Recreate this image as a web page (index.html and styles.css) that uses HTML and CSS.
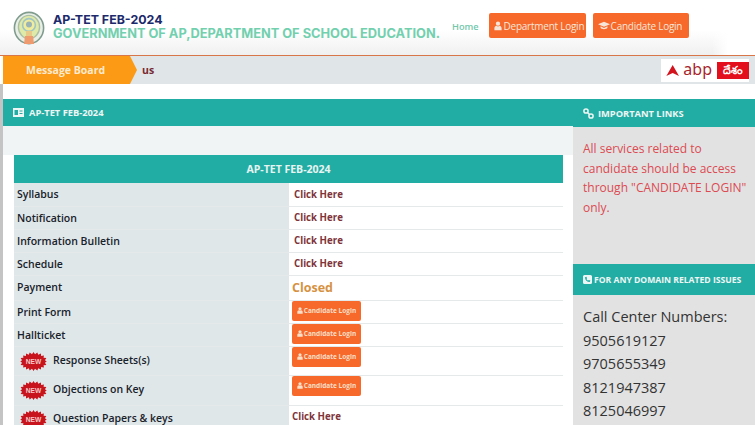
FILE: index.html
```html
<!DOCTYPE html>
<html lang="en">
<head>
<meta charset="utf-8">
<title>AP-TET FEB-2024</title>
<link rel="stylesheet" href="styles.css">
</head>
<body>
<svg class="defs" width="0" height="0" aria-hidden="true">
  <symbol id="user" viewBox="0 0 12 14"><circle cx="6" cy="3.6" r="3.2" fill="currentColor"/><path d="M0.6 13.4V10.4C0.6 8.2 2.2 7 3.6 6.7 4.4 7.3 5.2 7.6 6 7.6S7.6 7.3 8.4 6.7C9.8 7 11.4 8.2 11.4 10.4V13.4Z" fill="currentColor"/></symbol>
  <symbol id="burst" viewBox="0 0 28 20"><polygon fill="#c8141c" points="14,0 15.6,2.4 18,0.6 19,3 21.8,1.6 22,4.2 25,3.6 24.6,6 27.6,6.4 26,8.6 28,10 26,11.4 27.6,13.6 24.6,14 25,16.4 22,15.8 21.8,18.4 19,17 18,19.4 15.6,17.6 14,20 12.4,17.6 10,19.4 9,17 6.2,18.4 6,15.8 3,16.4 3.4,14 0.4,13.6 2,11.4 0,10 2,8.6 0.4,6.4 3.4,6 3,3.6 6,4.2 6.2,1.6 9,3 10,0.6 12.4,2.4"/></symbol>
</svg>

<header class="top">
  <div class="brand">
    <svg class="emblem" width="32" height="36" viewBox="0 0 32 36">
      <ellipse cx="16" cy="17" rx="14.6" ry="15.6" fill="#e9efe6" stroke="#7f9c8e" stroke-width="1.6"/>
      <ellipse cx="16" cy="16" rx="10.6" ry="11.6" fill="#dfe9a8" stroke="#a9c0a6" stroke-width="1.4"/>
      <circle cx="16" cy="14" r="6.4" fill="#f1ec9c" stroke="#9fc5c4" stroke-width="1.6"/>
      <circle cx="16" cy="13.6" r="3" fill="#9ab3b4"/>
      <path d="M12 25H20L21 33H11Z" fill="#f09a70"/>
      <rect x="13" y="20" width="6" height="5" fill="#e8c98a"/>
    </svg>
    <div class="titles">
      <div class="title-main">AP-TET FEB-2024</div>
      <div class="title-sub">GOVERNMENT OF AP,DEPARTMENT OF SCHOOL EDUCATION.</div>
    </div>
  </div>
  <nav class="nav">
    <a class="nav-home">Home</a>
    <a class="btn-top btn-dept"><svg width="8" height="10"><use href="#user"/></svg>Department Login</a>
    <a class="btn-top btn-cand"><svg width="12" height="9" viewBox="0 0 14 10"><path d="M7 0.5 14 3.5 7 6.5 0 3.5ZM3 6V8C4.5 9.8 9.5 9.8 11 8V6L7 7.8Z" fill="currentColor"/></svg>Candidate Login</a>
  </nav>
</header>

<section class="board">
  <div class="board-label">Message Board</div>
  <div class="board-msg">us</div>
  <div class="abp">
    <svg width="14" height="11" viewBox="0 0 15 13"><path d="M7.5 0 15 13 7.5 9.6 0 13Z" fill="#d3141f"/></svg>
    <span class="abp-word">abp</span>
    <span class="abp-tag">దేశం</span>
  </div>
</section>

<main class="content">
  <section class="left">
    <h2 class="bar"><svg width="11" height="9" viewBox="0 0 11 9"><path fill="currentColor" fill-rule="evenodd" d="M0 0H11V9H0ZM1.5 2V7H5V2ZM6.5 2.5V3.5H9.5V2.5ZM6.5 5V6H9.5V5Z"/></svg>AP-TET FEB-2024</h2>
    <div class="left-body">
      <table class="grid">
        <colgroup><col class="col-lbl"><col></colgroup>
        <thead><tr><th colspan="2">AP-TET FEB-2024</th></tr></thead>
        <tbody>
          <tr class="r23"><td class="lbl">Syllabus</td><td class="val"><a class="lnk">Click Here</a></td></tr>
          <tr class="r23"><td class="lbl">Notification</td><td class="val"><a class="lnk">Click Here</a></td></tr>
          <tr class="r23"><td class="lbl">Information Bulletin</td><td class="val"><a class="lnk">Click Here</a></td></tr>
          <tr class="r23"><td class="lbl">Schedule</td><td class="val"><a class="lnk">Click Here</a></td></tr>
          <tr class="r25"><td class="lbl lbl-up">Payment</td><td class="val tight"><span class="closed">Closed</span></td></tr>
          <tr class="r23"><td class="lbl">Print Form</td><td class="val top"><a class="btn-sm"><svg width="6" height="7"><use href="#user"/></svg>Candidate Login</a></td></tr>
          <tr class="r23"><td class="lbl">Hallticket</td><td class="val top"><a class="btn-sm"><svg width="6" height="7"><use href="#user"/></svg>Candidate Login</a></td></tr>
          <tr class="r29"><td class="lbl new"><svg class="burst" width="27" height="19" viewBox="0 0 28 20"><use href="#burst"/><text x="14" y="13" text-anchor="middle" class="burst-text">NEW</text></svg>Response Sheets(s)</td><td class="val top"><a class="btn-sm"><svg width="6" height="7"><use href="#user"/></svg>Candidate Login</a></td></tr>
          <tr class="r30"><td class="lbl new"><svg class="burst" width="27" height="19" viewBox="0 0 28 20"><use href="#burst"/><text x="14" y="13" text-anchor="middle" class="burst-text">NEW</text></svg>Objections on Key</td><td class="val top"><a class="btn-sm"><svg width="6" height="7"><use href="#user"/></svg>Candidate Login</a></td></tr>
          <tr class="r30"><td class="lbl new lbl-last"><svg class="burst" width="27" height="19" viewBox="0 0 28 20"><use href="#burst"/><text x="14" y="13" text-anchor="middle" class="burst-text">NEW</text></svg>Question Papers &amp; keys</td><td class="val top last"><a class="lnk">Click Here</a></td></tr>
        </tbody>
      </table>
    </div>
  </section>
  <aside class="side">
    <h2 class="bar side-first"><svg width="11" height="11" viewBox="0 0 11 11"><g fill="none" stroke="currentColor" stroke-width="1.5"><circle cx="3" cy="3" r="2.1"/><circle cx="8" cy="8" r="2.1"/><path d="M4.5 4.5 6.5 6.5"/></g></svg>IMPORTANT LINKS</h2>
    <p class="notice">All services related to candidate should be access through "CANDIDATE LOGIN" only.</p>
    <h2 class="bar side-second"><svg width="9" height="9" viewBox="0 0 9 9"><path fill="currentColor" fill-rule="evenodd" d="M1.5 0H7.5A1.5 1.5 0 0 1 9 1.5V7.5A1.5 1.5 0 0 1 7.5 9H1.5A1.5 1.5 0 0 1 0 7.5V1.5A1.5 1.5 0 0 1 1.5 0ZM2 2.2C2 5 4 7 6.8 7L7.4 5.6 5.8 4.9 5.2 5.6C4.6 5.3 3.8 4.5 3.5 3.9L4.1 3.3 3.4 1.7Z"/></svg>FOR ANY DOMAIN RELATED ISSUES</h2>
    <div class="phones">
      <div>Call Center Numbers:</div>
      <div>9505619127</div>
      <div>9705655349</div>
      <div>8121947387</div>
      <div>8125046997</div>
    </div>
  </aside>
</main>
</body>
</html>
```

FILE: styles.css
```css
* { box-sizing: border-box; }
html, body { margin: 0; height: 425px; overflow: hidden; }
body { background: #fff; font-family: "Open Sans", sans-serif; color: #222; }
.defs { position: absolute; }
h2 { margin: 0; }

.top {
  height: 56px;
  display: flex;
  border-bottom: 1px solid #d8764a;
  background:
    linear-gradient(to right, rgba(255,255,255,0) 712px, #fff 728px),
    linear-gradient(to bottom, #fff 55%, #f0f0f0 100%);
}
.brand { display: flex; align-items: flex-start; padding: 11px 0 0 13px; width: 451px; }
.emblem { flex: none; margin-right: 8px; }
.titles { padding-top: 2px; font-family: Inter, sans-serif; font-weight: 700; white-space: nowrap; }
.title-main { font-size: 12.4px; line-height: 13px; color: #1c2a6b; }
.title-sub { font-size: 12.8px; line-height: 15px; color: #72d0ae; }
.nav { display: flex; align-items: flex-start; padding-top: 13px; }
.nav-home { font-size: 9.2px; line-height: 14px; color: #72c8ac; margin: 7px 10px 0 1px; font-weight: 600; }
.btn-top {
  display: flex; align-items: center; gap: 2px;
  height: 25px; padding-left: 5px; margin-right: 7px;
  background: #f7692a; border-radius: 2px; color: #f6e6da;
  font-size: 10px; letter-spacing: -.25px; white-space: nowrap;
}
.btn-dept { width: 97px; }
.btn-cand { width: 96px; gap: 1px; }

.board { height: 28px; margin-left: 3px; display: flex; align-items: center; background: #e0e6e8; position: relative; }
.board-label {
  width: 134px; height: 28px; padding: 0 0 0 23px; line-height: 28px;
  background: #fc9a16; color: #fdebd0; font-weight: 700; font-size: 10.5px;
  clip-path: polygon(0 0, 127px 0, 134px 14px, 127px 100%, 0 100%);
}
.board-msg { margin-left: 5px; color: #7a2a30; font-weight: 700; font-size: 10.5px; }
.abp {
  position: absolute; right: 6px; top: 3px; width: 88px; height: 23px;
  display: flex; align-items: center; padding-left: 5px; background: #fff;
}
.abp-word { font-family: "Noto Sans", sans-serif; font-size: 16px; line-height: 18px; margin: -3px 5px 0 4px; color: #a8252b; }
.abp-tag { flex: none; width: 32px; height: 17px; line-height: 16px; text-align: center; background: #e30f1c; color: #fff; font-size: 11px; font-weight: 700; }

.content { display: flex; height: 341px; padding: 15px 0 0 3px; background: linear-gradient(to right, #c4c4c4 3px, #fff 3px); }
.left { width: 570px; flex: none; }
.bar {
  display: flex; align-items: center; gap: 5px;
  background: #22ada4; color: #edf6f4; font-size: 9.3px; font-weight: 700; white-space: nowrap;
}
.left > .bar { height: 27px; padding-left: 10px; }
.left-body { padding: 29px 11px 0 11px; height: 299px; background: linear-gradient(to bottom, #f1f4f5 0, #f1f4f5 29px, #fff 29px); }
.grid { border-collapse: collapse; width: 549px; table-layout: fixed; }
.col-lbl { width: 275px; }
.grid th {
  height: 28px; padding: 0; background: #22ada4; color: #e8f4f2;
  font-size: 10.5px; font-weight: 700; text-align: center;
}
.grid td { padding: 0; border-bottom: 1px solid #e6e9ea; }
.r23 td { height: 23px; }
.r25 td { height: 25px; }
.r29 td { height: 29px; }
.r30 td { height: 30px; }
.lbl { padding-left: 3px !important; background: #e0e7e9; color: #18222b; font-size: 10.5px; font-weight: 600; }
.lbl-up { padding-bottom: 2px !important; }
.val { padding-left: 5px !important; background: #fff; font-size: 10px; line-height: 10px; }
.val.tight { padding-left: 3px !important; }
.val.top { vertical-align: top; padding-left: 3px !important; }
.val.last { padding-top: 6px !important; }
.lbl-last { vertical-align: top; padding-top: 4px !important; }
.lnk { color: #7f3439; font-size: 9.7px; font-weight: 700; }
.closed { color: #d69243; font-size: 12.5px; font-weight: 700; }
.btn-sm {
  display: flex; align-items: center; justify-content: center; gap: 1px;
  width: 69px; height: 20px;
  background: #f7692a; border-radius: 2px; color: #fadfc8; font-size: 6.5px; line-height: 8px; font-weight: 700;
}
.new { padding-left: 6px !important; }
.burst { vertical-align: middle; margin-right: 6px; }
.burst-text { font-family: "Liberation Sans", sans-serif; font-size: 7px; font-weight: 700; fill: #f7c9c9; }

.side { flex: 1; background: #e2e2e2; }
.side .bar { padding-left: 10px; }
.side-first { height: 28px; gap: 4px; }
.notice { margin: 0; padding: 12px 4px 0 10px; height: 137px; color: #dc4a52; font-size: 12px; line-height: 19.6px; }
.side-second { height: 31px; font-size: 8.6px; gap: 2px; }
.phones { padding: 10px 0 0 10px; font-size: 14.5px; line-height: 23.6px; color: #333; white-space: nowrap; }
```
